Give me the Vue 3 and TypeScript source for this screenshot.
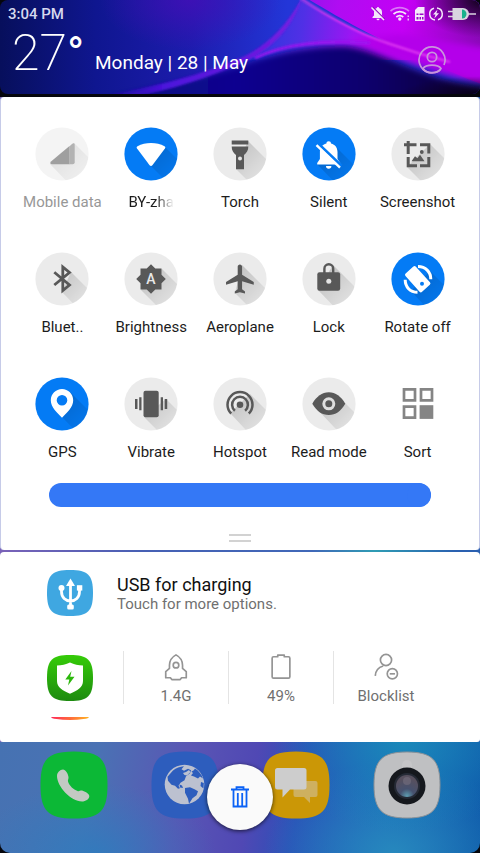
<script setup lang="ts">
import { ref } from 'vue'

interface Tile {
  id: string
  label: string
  state: 'on' | 'off' | 'disabled' | 'plain'
  shadow?: string
  fade?: boolean
}

const tiles = ref<Tile[]>([
  { id: 'data', label: 'Mobile data', state: 'disabled', shadow: '39,16 66,43 43,66 15,37' },
  { id: 'wifi', label: 'BY-zha', state: 'on', shadow: '41,20 68,47 54,66 27,39', fade: true },
  { id: 'torch', label: 'Torch', state: 'off', shadow: '35,14 68,47 50,69 23,42' },
  { id: 'silent', label: 'Silent', state: 'on', shadow: '31,17 68,54 43,66 15,37' },
  { id: 'shot', label: 'Screenshot', state: 'off', shadow: '39,17 70,48 43,67 16,40' },
  { id: 'bt', label: 'Bluet..', state: 'off', shadow: '36,20 68,52 54,68 27,40' },
  { id: 'bright', label: 'Brightness', state: 'off', shadow: '38,17 68,47 47,68 17,38' },
  { id: 'plane', label: 'Aeroplane', state: 'off', shadow: '29,13 68,52 50,69 22,41' },
  { id: 'lock', label: 'Lock', state: 'off', shadow: '31,13 70,52 43,66 16,38' },
  { id: 'rotate', label: 'Rotate off', state: 'on', shadow: '39,19 68,48 47,68 20,39' },
  { id: 'gps', label: 'GPS', state: 'on', shadow: '35,15 68,48 54,68 27,40' },
  { id: 'vibrate', label: 'Vibrate', state: 'off', shadow: '42,22 68,48 48,68 20,40' },
  { id: 'hotspot', label: 'Hotspot', state: 'off', shadow: '37,17 68,48 47,68 17,36' },
  { id: 'read', label: 'Read mode', state: 'off', shadow: '43,26 68,51 49,68 14,31' },
  { id: 'sort', label: 'Sort', state: 'plain' },
])

const level = ref(100)

function toggle(tile: Tile) {
  if (tile.state === 'on') tile.state = 'off'
  else if (tile.state === 'off') tile.state = 'on'
}
</script>

<template>
  <div class="shell">
    <header class="top">
      <svg class="wall" viewBox="0 0 480 94" preserveAspectRatio="none" aria-hidden="true">
        <defs>
          <linearGradient id="sky" x1="0" y1="0" x2="1" y2="0">
            <stop offset="0" stop-color="#070f5c" />
            <stop offset=".2" stop-color="#0f1690" />
            <stop offset=".4" stop-color="#1d1cae" />
            <stop offset=".6" stop-color="#2336d8" />
            <stop offset="1" stop-color="#2a2ad0" />
          </linearGradient>
          <linearGradient id="pink" gradientUnits="userSpaceOnUse" x1="290" y1="0" x2="480" y2="40">
            <stop offset="0" stop-color="#8a16e8" />
            <stop offset=".25" stop-color="#b00cf2" />
            <stop offset=".6" stop-color="#c400f5" />
            <stop offset="1" stop-color="#8a08b8" />
          </linearGradient>
          <linearGradient id="wedge" gradientUnits="userSpaceOnUse" x1="250" y1="20" x2="380" y2="40">
            <stop offset="0" stop-color="#2438da" />
            <stop offset=".4" stop-color="#5030e6" />
            <stop offset=".8" stop-color="#a014f4" />
            <stop offset="1" stop-color="#b80af5" />
          </linearGradient>
          <linearGradient id="deep" x1="0" y1="0" x2="1" y2="0">
            <stop offset="0" stop-color="#0a1478" />
            <stop offset=".4" stop-color="#080490" />
            <stop offset=".7" stop-color="#08036c" />
            <stop offset="1" stop-color="#0a0328" />
          </linearGradient>
          <radialGradient id="dusk">
            <stop offset="0" stop-color="#020008" stop-opacity=".95" />
            <stop offset="1" stop-color="#100020" stop-opacity="0" />
          </radialGradient>
          <radialGradient id="violet">
            <stop offset="0" stop-color="#4a0cb8" stop-opacity=".7" />
            <stop offset="1" stop-color="#4a0cb8" stop-opacity="0" />
          </radialGradient>
          <linearGradient id="streak" x1="0" y1="0" x2="1" y2="0">
            <stop offset="0" stop-color="#3a0cc0" stop-opacity="0" />
            <stop offset=".35" stop-color="#4c12dc" />
            <stop offset="1" stop-color="#7a1ce0" />
          </linearGradient>
          <filter id="s1" x="-10%" y="-40%" width="120%" height="180%"><feGaussianBlur stdDeviation="1" /></filter>
          <filter id="s2" x="-10%" y="-40%" width="120%" height="180%"><feGaussianBlur stdDeviation="3" /></filter>
        </defs>
        <rect width="480" height="94" fill="url(#sky)" />
        <ellipse cx="190" cy="0" rx="90" ry="50" fill="url(#violet)" />
        <path d="M300 0 C340 22 370 38 400 48 L420 60 H240 C270 46 290 24 300 0z" fill="url(#wedge)" />
        <path d="M296 -8 C340 18 370 36 400 47 C430 62 460 78 500 90 V-8z" fill="url(#pink)" />
        <path d="M350 40 C400 60 440 76 500 86 V50 L400 34z" fill="#b402ea" filter="url(#s2)" />
        <path d="M60 110 C140 90 200 80 250 62 C280 52 310 46 345 46 C385 50 420 82 500 90 V110z" fill="url(#deep)" filter="url(#s2)" />
        <path d="M90 98 C150 88 200 76 245 56 C268 44 286 26 301 0 C291 30 270 50 246 61 C200 82 160 92 120 100z" fill="url(#streak)" filter="url(#s1)" />
        <path d="M255 58 C285 44 320 40 370 43" fill="none" stroke="#9c18f0" stroke-width="3" filter="url(#s1)" />
        <path d="M300 -2 C330 18 360 34 390 44 C410 51 430 57 450 62" fill="none" stroke="#e23cf2" stroke-width="2" filter="url(#s1)" />
        <ellipse cx="485" cy="0" rx="70" ry="38" fill="url(#dusk)" />
        <ellipse cx="485" cy="98" rx="90" ry="22" fill="url(#dusk)" />
      </svg>

      <div class="status">
        <span class="clock">3:04 PM</span>
        <svg class="status-icons" viewBox="0 0 108 16" role="img" aria-label="Silent, Wi-Fi, SIM, power saving, charging">
          <path d="M8 1c.7 0 1 .5 1 1 2 .6 3 2.200 3 4.200v3.200l1.500 1.600v1h-11v-1L4 9.400V6.200C4 4 5.200 2.600 7 2c0-.5.300-1 1-1zM6.500 12.800h3A1.500 1.500 0 0 1 6.500 12.800z" fill="#f4e9fa" />
          <path d="M2.500 1l12 12" stroke="#8e08ba" stroke-width="1.500" />
          <path d="M1.500 1.500l12.500 12.500" stroke="#f4e9fa" stroke-width="1.500" />
          <g fill="none" stroke="#f4e9fa" stroke-width="1.700">
            <path d="M20.500 5.200a14 14 0 0 1 18.500 0" opacity=".5" />
            <path d="M23.500 8a9.500 9.500 0 0 1 12.500 0" />
            <path d="M26.300 11a5.500 5.500 0 0 1 7 0" />
          </g>
          <circle cx="29.800" cy="13" r="1.700" fill="#f4e9fa" />
          <path d="M37.500 9.500h1.500v1.500h-1.500zM37.500 12.500h1.500v2h-1.500z" fill="#f4e9fa" opacity=".8" />
          <path d="M48 1h6.500v14H45V4z" fill="#f4e9fa" />
          <path d="M46.500 7.500h2v1.500h-2zM49.500 7.500h4v1.500h-4zM46.500 11h2v2.500h-2zM49.500 11h1.500v2.500h-1.500zM52 11h1.500v2.500H52z" fill="#9c08ca" />
          <path d="M64 2.300A6 6 0 0 0 65 14M68 13.700A6 6 0 0 0 67 2" fill="none" stroke="#f4e9fa" stroke-width="1.500" />
          <path d="M67.500 3.500l-4.500 5h2.500l-1.200 4 4.700-5.300h-2.600z" fill="#f4e9fa" />
          <path d="M78 5.500h5M78 10.500h5M98 8h8" stroke="#d9d4e0" stroke-width="1.600" />
          <path d="M82.500 2H93a6 6 0 0 1 0 12H82.500z" fill="#d9d4e0" />
          <path d="M92 3.500a4.500 4.500 0 0 1 0 9z" fill="#18b08c" />
        </svg>
      </div>

      <div class="summary">
        <span class="temp">27<span class="deg">°</span></span>
        <span class="date">Monday | 28 | May</span>
        <button class="profile" type="button" aria-label="Profile">
          <svg viewBox="0 0 28 28" fill="none" stroke="#c893dc" stroke-width="1.700">
            <path d="M26 19A13 13 0 1 0 22 24.200" />
            <circle cx="14" cy="11" r="4.700" />
            <path d="M5 22.500c3-4.500 15-4.500 18 0C20 28 8 28 5 22.500z" />
          </svg>
        </button>
      </div>
    </header>

    <main class="sheets">
      <section class="panel" aria-label="Quick settings">
        <svg class="defs" width="0" height="0" aria-hidden="true">
          <defs>
            <clipPath id="disc"><circle cx="27" cy="27" r="26.600" /></clipPath>
            <linearGradient id="cast" gradientUnits="userSpaceOnUse" x1="24" y1="24" x2="47" y2="47">
              <stop offset="0" stop-color="#000" stop-opacity=".16" />
              <stop offset="1" stop-color="#000" stop-opacity=".05" />
            </linearGradient>
          </defs>
        </svg>
        <div class="tiles">
          <button v-for="t in tiles" :key="t.id" type="button" class="tile" :class="t.state" @click="toggle(t)">
            <svg class="glyph" viewBox="0 0 54 54" aria-hidden="true">
              <circle v-if="t.state !== 'plain'" class="disc" cx="27" cy="27" r="26.600" />
              <g v-if="t.shadow" clip-path="url(#disc)">
                <polygon :points="t.shadow" fill="url(#cast)" :opacity="t.state === 'disabled' ? 0.5 : 1" />
              </g>
              <g v-if="t.id === 'data'">
                <path d="M34.500 19L16 34.500c-1.300 1.200-.8 2.800 1 2.800h17.500z" fill="#9f9f9f" />
                <path d="M34.300 19.500l3-2.700c1.200-1 2.400-.5 2.400 1v17.500a2 2 0 0 1-2 2h-3.400z" fill="#b2b2b2" />
              </g>
              <path v-else-if="t.id === 'wifi'" class="ink" d="M27 16c5 0 9.500 1.200 13.500 3.200.9.500 1.100 1.200.6 2L28.400 38.300c-.8 1-2 1-2.800 0L12.900 21.200c-.5-.8-.3-1.500.6-2C17.500 17.200 22 16 27 16z" />
              <g v-else-if="t.id === 'torch'">
                <path class="ink" d="M18.700 13.500h16.600v4H18.700zM18.700 19.500h16.600c0 4-1.500 6-4.300 8.500v14.300h-8V28c-2.800-2.500-4.300-4.500-4.300-8.500z" />
                <circle cx="27" cy="31.500" r="2" fill="#e4e4e4" />
              </g>
              <g v-else-if="t.id === 'silent'">
                <path class="ink" d="M26.700 14.300c1.500 0 2.200.9 2.300 2.100 4.300 1 6.500 4.300 6.500 8.600V32l2.800 4v1.400H15.200V36l2.700-4v-7c0-4.300 2.300-7.600 6.500-8.600.1-1.200.8-2.100 2.300-2.100zM24 39h5.400a2.700 2.700 0 0 1-5.400 0z" />
                <path class="cut" d="M16 16.500L39.500 38.800" stroke-width="3" />
                <path class="line" d="M14.500 18.200L38 40.700" stroke-width="2.400" />
              </g>
              <g v-else-if="t.id === 'shot'">
                <path class="line" d="M17.200 14v13M13 17.800h12.500M29 17.800h8.800v8.700M37.800 30v8.700H29M26 38.700h-8.800V30" stroke-width="3" />
                <path class="ink" d="M20.500 34.300l3.500-5 2.500 2 2.500-3.500 4.500 6.500z" />
                <circle class="ink" cx="30.800" cy="25" r="1.900" />
              </g>
              <path v-else-if="t.id === 'bt'" class="line" d="M19.300 20.200L34.500 33 27.800 38.500V15L34.500 20.500 19.300 33" stroke-width="2.800" />
              <g v-else-if="t.id === 'bright'">
                <path class="ink" d="M27 12.200l4.300 4.300h6.200v6.200l4.300 4.300-4.300 4.300v6.200h-6.200L27 41.800l-4.300-4.300h-6.200v-6.200L12.200 27l4.300-4.300v-6.200h6.200z" />
                <text class="auto" x="27" y="32" text-anchor="middle">A</text>
              </g>
              <path v-else-if="t.id === 'plane'" class="ink" transform="translate(10.100 9.500) scale(1.460)" d="M21 16v-2l-8-5V3.500c0-.83-.67-1.500-1.500-1.500S10 2.670 10 3.500V9l-8 5v2l8-2.500V19l-2 1.500V22l3.500-1 3.500 1v-1.500L13 19v-5.500l8 2.500z" />
              <g v-else-if="t.id === 'lock'">
                <rect class="ink" x="15.300" y="20.200" width="22.900" height="18.600" rx="2.200" />
                <path class="line" d="M22.400 21v-4.300a4.400 4.400 0 0 1 8.800 0V21" stroke-width="2.400" />
                <circle cx="26.800" cy="29.300" r="2.500" fill="#e4e4e4" />
              </g>
              <g v-else-if="t.id === 'rotate'">
                <rect class="ink" x="14.600" y="20.200" width="24.600" height="14" rx="1.800" transform="rotate(48 26.800 27)" />
                <circle class="hole" cx="31" cy="31.700" r="2" />
                <path class="line" d="M27 14.500c7.500 0 12.800 5.500 12.800 12.800M26.500 40.300c-7.500 0-12.300-5.500-12.300-12.500" stroke-width="3" />
              </g>
              <path v-else-if="t.id === 'gps'" class="ink" fill-rule="evenodd" d="M27 12c6.200 0 11.200 5 11.200 11.200 0 7-6.200 12.300-11.200 17.500-5-5.200-11.200-10.500-11.200-17.500C15.800 17 20.800 12 27 12zm0 6a5.300 5.300 0 1 0 0 10.600A5.300 5.300 0 0 0 27 18z" />
              <g v-else-if="t.id === 'vibrate'" class="ink">
                <rect x="19.500" y="13.700" width="15.200" height="26.600" rx="2" />
                <path d="M11 22h2.500v10H11zM15.200 20.200h2.300v13h-2.300zM36.700 20.200H39v13h-2.300zM40.700 22h2.500v10h-2.500z" />
              </g>
              <g v-else-if="t.id === 'hotspot'">
                <circle class="ink" cx="27" cy="27.700" r="3.300" />
                <path class="line" d="M18.200 36.500a12.500 12.500 0 1 1 17.600 0M21.900 33.700a7.900 7.900 0 1 1 10.200 0" stroke-width="2.500" />
              </g>
              <g v-else-if="t.id === 'read'">
                <path class="ink" d="M10.300 26.700C14.500 19.500 20 15.300 26.800 15.300S39 19.500 43.300 26.700C39 34 33.600 38 26.800 38S14.500 34 10.300 26.700z" />
                <circle cx="26.800" cy="26.800" r="5" fill="none" stroke="#dedede" stroke-width="3" />
              </g>
              <g v-else>
                <path d="M13 12.400h11v11H13zM30 12.400h11v11H30zM13 29.600h11v11H13z" fill="none" stroke="#858585" stroke-width="2.700" />
                <rect x="28.600" y="28.200" width="13.700" height="13.700" fill="#858585" />
              </g>
            </svg>
            <span class="label" :class="{ fade: t.fade }">{{ t.label }}</span>
          </button>
        </div>
        <input v-model="level" class="slider" type="range" min="0" max="100" aria-label="Screen brightness" />
        <button class="grip" type="button" aria-label="Collapse panel"></button>
      </section>

      <section class="notes" aria-label="Notifications">
        <article class="note">
          <svg class="app" viewBox="0 0 46 46" aria-hidden="true">
            <path d="M23 0c18 0 23 5 23 23s-5 23-23 23S0 41 0 23 5 0 23 0z" fill="#3fa7e1" />
            <path d="M23.500 14v24M14.500 19v2.500c0 6 4 9.500 9 9.500s9-3.500 9-9.500V19" fill="none" stroke="#fff" stroke-width="2.800" />
            <path d="M23.500 8.500l4.500 7.500h-9z" fill="#fff" />
            <circle cx="14.500" cy="18" r="3" fill="#fff" />
            <rect x="29.900" y="15.200" width="5.400" height="5.400" fill="#fff" />
            <rect x="20.200" y="34.500" width="6.600" height="5" rx="1.500" fill="#fff" />
          </svg>
          <div class="text">
            <h2>USB for charging</h2>
            <p>Touch for more options.</p>
          </div>
        </article>

        <article class="note guard">
          <svg class="app" viewBox="0 0 46 46" aria-hidden="true">
            <defs>
              <linearGradient id="leaf" x1="0" y1="0" x2="0" y2="1">
                <stop offset="0" stop-color="#35cc08" />
                <stop offset="1" stop-color="#1d8a10" />
              </linearGradient>
            </defs>
            <path d="M23 0c18 0 23 5 23 23s-5 23-23 23S0 41 0 23 5 0 23 0z" fill="url(#leaf)" />
            <path d="M23 7.500c4 2 8.500 3 13 3V26c0 6.500-5.500 9.500-13 12.800C15.500 35.500 10 32.500 10 26V10.500c4.500 0 9-1 13-3z" fill="#fff" />
            <path d="M24.500 16L18.300 24.500h4L21 30.500l6.500-8.700h-4.300z" fill="#2cb80c" />
          </svg>
          <div class="cells">
            <a class="cell" href="#memory">
              <svg viewBox="0 0 30 30" fill="none" stroke="#949494" stroke-width="1.800" stroke-linejoin="round" aria-hidden="true">
                <path d="M15 2C10.500 4.500 8 8.500 8 13v3.500L4 20v6.500h5l1.500 2h9l1.500-2h5V20l-4-3.500V13c0-4.500-2.500-8.500-7-11z" />
                <circle cx="15" cy="13" r="3" />
              </svg>
              <span>1.4G</span>
            </a>
            <a class="cell" href="#battery">
              <svg viewBox="0 0 30 30" fill="none" stroke="#949494" stroke-width="1.800" stroke-linejoin="round" aria-hidden="true">
                <path d="M7 4h4.500V2.300h7V4H23a1.500 1.500 0 0 1 1.500 1.500v20A1.500 1.500 0 0 1 23 27H7a1.500 1.500 0 0 1-1.500-1.500v-20A1.500 1.500 0 0 1 7 4z" />
              </svg>
              <span>49%</span>
            </a>
            <a class="cell" href="#blocklist">
              <svg viewBox="0 0 30 30" fill="none" stroke="#949494" stroke-width="1.800" aria-hidden="true">
                <circle cx="15" cy="7.500" r="6" />
                <path d="M3.500 24.500C3.800 19 7 15.500 12 14" />
                <circle cx="21.800" cy="22.300" r="5.500" />
                <path d="M19 22.300h5.600" />
              </svg>
              <span>Blocklist</span>
            </a>
          </div>
        </article>
        <div class="peek"></div>
      </section>
    </main>

    <footer class="dock">
      <nav class="apps" aria-label="Dock">
        <a href="#phone" aria-label="Phone">
          <svg viewBox="0 0 68 68">
            <path d="M34 .5C60 .5 67.500 8 67.500 34S60 67.500 34 67.500.5 60 .5 34 8 .5 34 .5z" fill="#0cb836" />
            <path d="M23 18.500c2.500 0 5 4 5.500 7.500.3 2-1 3-.5 4.500 1.500 4.500 5.500 8 9.500 9.500 1.800.7 3-1 5.200-.2 3 1 6.600 3.200 6.600 5.400 0 2.800-3.800 5.300-7.300 5.300-11 0-25-15-25-25.500 0-3.500 3-6.500 6-6.500z" fill="#c3c9c3" />
          </svg>
        </a>
        <a href="#browser" aria-label="Browser">
          <svg viewBox="0 0 68 68">
            <path d="M34 .5C60 .5 67.500 8 67.500 34S60 67.500 34 67.500.5 60 .5 34 8 .5 34 .5z" fill="#2d5dbd" />
            <circle cx="33.500" cy="33.500" r="19.800" fill="#bcc1d0" />
            <g fill="#2d5dbd">
              <path d="M22 19.500c3-2.500 7-4 11-4.200l-2.500 3 2.500 1.500 4-2 3 1.500-1 3-4 3-1.500 4-4 2.500-2 3 1.500 2.500-2 .5-3-3-3.500-1-3.500-4-.5-4z" />
              <path d="M28.500 33.500l2.500 1 1 2.500-3-.5z" />
              <path d="M34 37l5-.8 4.500 2 3.500 2-1.500 4-4 3-3.500 5.500-1-5-3-6z" />
              <path d="M44 17.500c4 2.500 6.500 6 8 10l-3-2-2 2-4-2-3-1 2-2.500-1.500-1.500 2-1z" />
              <path d="M50 31l2.800 1-.3 5.500-3-2.500z" />
            </g>
            <path d="M32 22l3-1 3-2 1.500 2-3.500 3.500-2.500-.5z" fill="#bcc1d0" />
          </svg>
        </a>
        <a href="#messages" aria-label="Messages">
          <svg viewBox="0 0 68 68">
            <path d="M34 .5C60 .5 67.500 8 67.500 34S60 67.500 34 67.500.5 60 .5 34 8 .5 34 .5z" fill="#cb9706" />
            <path d="M33 30h20.500a2 2 0 0 1 2 2v12a2 2 0 0 1-2 2H48v6l-6-6h-8.500a2 2 0 0 1-2-2V32z" fill="#ceb060" />
            <path d="M15.500 17H42a2.500 2.500 0 0 1 2.500 2.500V36a2.500 2.500 0 0 1-2.500 2.500H28L20.500 46.500V38.500h-5A2.500 2.500 0 0 1 13 36V19.500A2.500 2.500 0 0 1 15.500 17z" fill="#cdcdcd" />
          </svg>
        </a>
        <a href="#camera" aria-label="Camera">
          <svg viewBox="0 0 68 68">
            <defs>
              <radialGradient id="lens" cx=".5" cy=".95" r=".8">
                <stop offset="0" stop-color="#5d9cb0" />
                <stop offset=".4" stop-color="#46516e" />
                <stop offset="1" stop-color="#57505e" />
              </radialGradient>
            </defs>
            <path d="M34 1C59 1 67 9 67 34S59 67 34 67 1 59 1 34 9 1 34 1z" fill="#bfc0c2" stroke="#8d9298" />
            <circle cx="34" cy="14" r="5" fill="#c6c6c8" />
            <circle cx="34" cy="35" r="18.500" fill="#15181d" />
            <circle cx="34" cy="35" r="13" fill="#252a35" />
            <circle cx="34" cy="35" r="11" fill="url(#lens)" />
            <circle cx="34" cy="30" r="4" fill="#77707e" opacity=".6" />
          </svg>
        </a>
      </nav>
      <button class="clear" type="button" aria-label="Clear all notifications">
        <svg viewBox="0 0 20 22" fill="none" stroke="#0b62f5" stroke-width="1.800" aria-hidden="true">
          <path d="M1 3.500h18M6.500 3V1.200h7V3M3.500 3.500v17h13v-17M7.800 7v13.500M12.200 7v13.500" />
        </svg>
      </button>
    </footer>
  </div>
</template>

<style>
body {
  background: #000;
}
</style>

<style scoped>
.shell {
  display: flex;
  flex-direction: column;
  min-height: 100vh;
  font-family: Roboto, "Liberation Sans", sans-serif;
  color: #1c1c1c;
  background: #05060c;
}
button {
  font: inherit;
  color: inherit;
  padding: 0;
  border: 0;
  background: none;
  cursor: pointer;
}
a {
  color: inherit;
  text-decoration: none;
}
svg {
  display: block;
}
.top {
  position: relative;
  height: 94px;
  margin-bottom: 3px;
  border-radius: 8px;
  overflow: hidden;
  color: #fff;
}
.wall {
  position: absolute;
  inset: 0;
  width: 100%;
  height: 100%;
}
.status {
  position: relative;
  display: flex;
  justify-content: space-between;
  align-items: center;
  height: 27px;
  padding: 0 2px 0 8px;
}
.clock {
  font-size: 15px;
  font-weight: 500;
  color: #d5d8ee;
}
.status-icons {
  width: 108px;
  height: 16px;
}
.summary {
  position: relative;
  display: flex;
  align-items: center;
  height: 52px;
  padding: 0 34px 0 12px;
}
.temp {
  width: 83px;
  font-size: 50px;
  font-weight: 200;
  line-height: 52px;
  white-space: nowrap;
}
.deg {
  font-size: 46px;
  font-weight: 400;
  line-height: 46px;
}
.date {
  flex: 1;
  padding-top: 18px;
  font-size: 19px;
}
.profile {
  margin-top: 14px;
}
.profile svg {
  width: 28px;
  height: 28px;
}
.sheets {
  background: linear-gradient(90deg, #7a62b8 0, #4660b4 30%, #4068b8 65%, #2f9cb4 78%, #2a60b0 95%);
}
.panel {
  display: flex;
  flex-direction: column;
  align-items: center;
  padding: 0 17px 8px;
  border-radius: 4px;
  border: solid #c6cbe8;
  border-width: 0 1px;
  background: #fff;
}
.defs {
  position: absolute;
}
.tiles {
  display: grid;
  grid-template-columns: repeat(5, 1fr);
  row-gap: 40px;
  width: 100%;
  padding-top: 30px;
}
.tile {
  display: flex;
  flex-direction: column;
  align-items: center;
  gap: 11px;
}
.glyph {
  width: 54px;
  height: 54px;
}
.label {
  font-size: 15px;
  line-height: 20px;
  white-space: nowrap;
}
.fade {
  background: linear-gradient(90deg, #1c1c1c 60%, transparent);
  background-clip: text;
  color: transparent;
}
.disabled .label {
  color: #979797;
}
.disc {
  fill: #ebebeb;
}
.disabled .disc {
  fill: #f4f4f4;
}
.on .disc {
  fill: #047bf5;
}
.ink {
  fill: #585858;
}
.line {
  fill: none;
  stroke: #585858;
}
.on .ink {
  fill: #fff;
}
.on .line {
  stroke: #fff;
}
.cut {
  fill: none;
  stroke: #ebebeb;
}
.on .cut {
  stroke: #047bf5;
}
.hole {
  fill: #ebebeb;
}
.on .hole {
  fill: #047bf5;
}
.auto {
  fill: #e8e8e8;
  font-size: 14px;
  font-weight: 500;
}
.slider {
  appearance: none;
  width: 86%;
  height: 24px;
  margin: 21px 0 0;
  border-radius: 12px;
  background: #3478f6;
  overflow: hidden;
}
.slider::-webkit-slider-thumb {
  appearance: none;
  width: 24px;
  height: 24px;
  border-radius: 12px;
  background: #3478f6;
}
.grip {
  width: 22px;
  height: 8px;
  margin-top: 27px;
  border: solid #d2d2d2;
  border-width: 2px 0;
}
.notes {
  box-sizing: border-box;
  min-height: 190px;
  margin-top: 2px;
  padding: 18px 42px 0 47px;
  border-radius: 4px 4px 3px 3px;
  background: #fff;
}
.note {
  display: flex;
  align-items: center;
  gap: 24px;
}
.app {
  flex: none;
  width: 46px;
  height: 46px;
}
.text h2 {
  margin: 0;
  font-size: 18px;
  font-weight: 400;
  line-height: 21px;
  color: #111;
}
.text p {
  margin: 0;
  font-size: 15px;
  line-height: 18px;
  color: #707070;
}
.guard {
  gap: 30px;
  margin-top: 35px;
}
.cells {
  flex: 1;
  display: grid;
  grid-template-columns: repeat(3, 1fr);
}
.cell {
  display: flex;
  flex-direction: column;
  align-items: center;
  justify-content: space-between;
  gap: 7px;
  height: 53px;
  border-left: 1px solid #e4e4e4;
  font-size: 15px;
  line-height: 16px;
  color: #707070;
}
.cell svg {
  width: 30px;
  height: 30px;
  margin-top: 2px;
}
.peek {
  width: 38px;
  height: 3px;
  margin: 13px 0 0 4px;
  border-radius: 50% 50% 50% 50% / 0 0 100% 100%;
  background: linear-gradient(90deg, #ff2858, #ff6a3c 50%, #ffb422);
}
.dock {
  position: relative;
  flex: 1;
  min-height: 111px;
  border-radius: 0 0 10px 10px;
  background:
    radial-gradient(ellipse 130px 90px at 84% 0, rgba(25, 140, 185, 0.9), transparent),
    radial-gradient(ellipse 130px 90px at 82% 100%, rgba(40, 140, 190, 0.9), transparent),
    radial-gradient(ellipse 120px 70px at 20% 100%, rgba(45, 125, 190, 0.8), transparent),
    linear-gradient(100deg, #4672b2 0, #4a72b4 20%, #5a56b4 38%, #5048b4 52%, #2a50b8 62%, #1c64ba 80%, #0c55a8 100%);
}
.apps {
  display: flex;
  justify-content: space-between;
  padding: 9px 39px 0 40px;
}
.apps svg {
  width: 68px;
  height: 68px;
}
.clear {
  position: absolute;
  top: 22px;
  left: 50%;
  display: grid;
  place-items: center;
  width: 66px;
  height: 66px;
  margin-left: -33px;
  border-radius: 50%;
  background: #fafafa;
  box-shadow: 0 1px 4px rgba(0, 0, 0, 0.7);
}
.clear svg {
  width: 20px;
  height: 22px;
}
</style>
